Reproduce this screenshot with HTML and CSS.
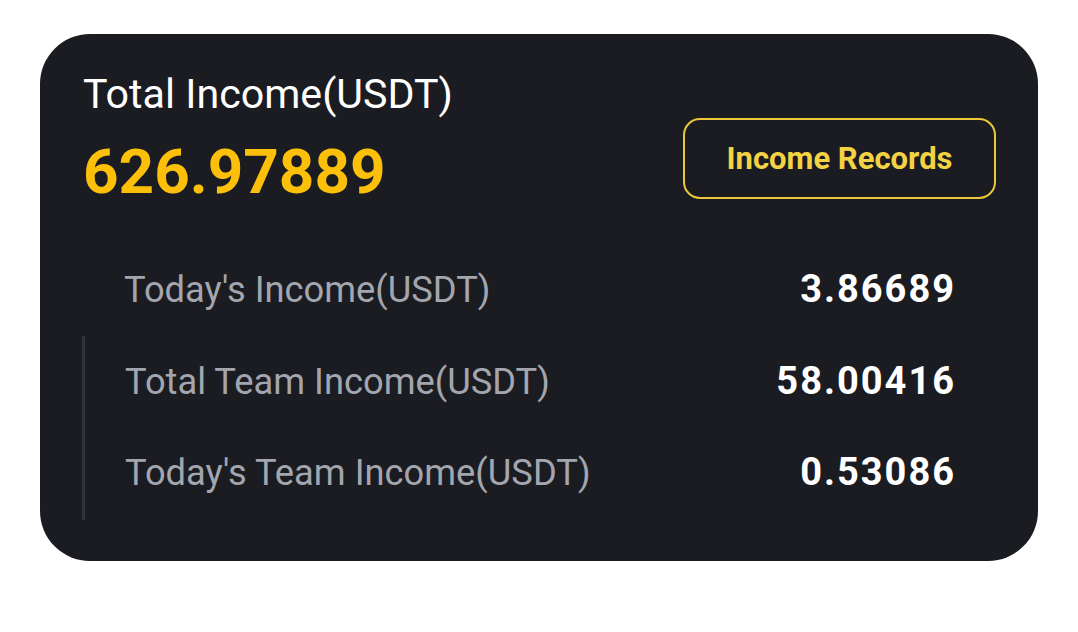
FILE: index.html
```html
<!DOCTYPE html>
<html>
<head>
<meta charset="utf-8">
<link rel="stylesheet" href="styles.css">
</head>
<body>
<div class="card">
  <div class="header">
    <div class="total">
      <div class="title">Total Income(USDT)</div>
      <div class="amount">626.97889</div>
    </div>
    <button class="records">Income Records</button>
  </div>
  <div class="rows">
    <div class="row"><span class="label">Today's Income(USDT)</span><span class="value">3.86689</span></div>
    <div class="team">
      <div class="row"><span class="label">Total Team Income(USDT)</span><span class="value">58.00416</span></div>
      <div class="row"><span class="label">Today's Team Income(USDT)</span><span class="value">0.53086</span></div>
    </div>
  </div>
</div>
</body>
</html>
```
FILE: styles.css
```css
html, body { margin: 0; padding: 0; background: #ffffff; }
body { font-family: Roboto, "Liberation Sans", sans-serif; }
.card {
  margin: 34px 0 0 40px;
  width: 998px;
  height: 527px;
  box-sizing: border-box;
  background: #1a1c22;
  border-radius: 50px;
  padding: 36px 42px 0 43px;
}
.header { display: flex; justify-content: space-between; align-items: flex-start; }
.title { color: #ffffff; font-size: 41.2px; line-height: 48px; }
.amount { color: #fcc00b; font-size: 62px; font-weight: 700; line-height: 74px; margin-top: 17px; }
.records {
  margin-top: 48px;
  width: 313px;
  height: 81px;
  box-sizing: border-box;
  background: transparent;
  border: 2px solid #e9c83a;
  border-radius: 17px;
  color: #f3d343;
  font-family: Roboto, "Liberation Sans", sans-serif;
  font-size: 31px;
  font-weight: 700;
  padding: 0;
}
.rows { margin-top: 35px; margin-right: 40px; }
.row { display: flex; justify-content: space-between; align-items: baseline; height: 91px; line-height: 91px; }
.rows > .row { padding-left: 41px; }
.team { border-left: 3px solid #30333a; margin-left: -1px; margin-top: 1px; padding-left: 40px; padding-bottom: 2px; }
.label { color: #a3a6ae; font-size: 36.3px; }
.value { color: #ffffff; font-size: 38px; font-weight: 700; letter-spacing: 2px; }
```
